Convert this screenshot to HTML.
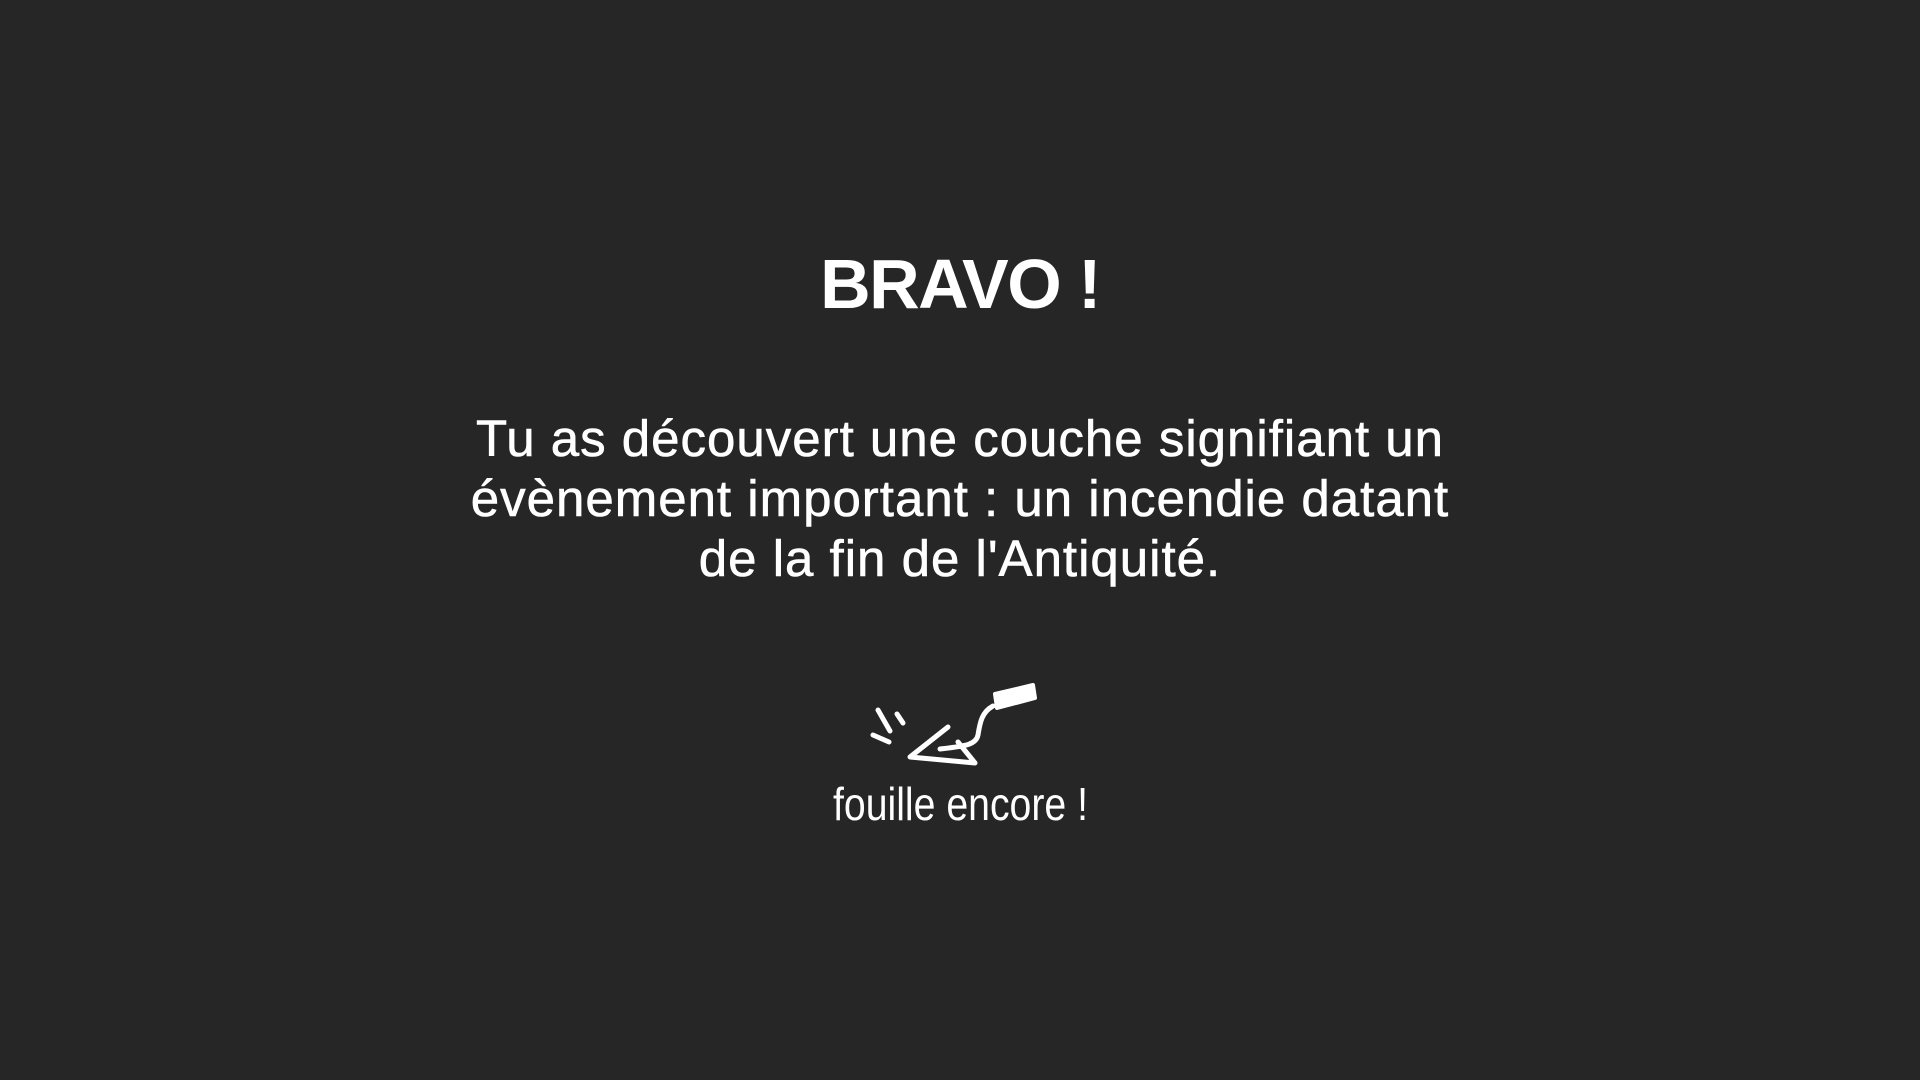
<!DOCTYPE html>
<html><head><meta charset="utf-8"><style>
html,body{margin:0;padding:0;width:1920px;height:1080px;background:#262626;overflow:hidden}
body{position:relative;font-family:"Liberation Sans",sans-serif;color:#fff}
h1{position:absolute;left:0;width:1920px;top:242px;margin:0;text-align:center;font-size:70px;font-weight:bold;letter-spacing:-1.5px;line-height:84px}
p{position:absolute;left:0;width:1920px;top:409px;margin:0;text-align:center;font-size:51px;letter-spacing:1px;line-height:60px;-webkit-text-stroke:0.6px #fff}
</style></head><body>
<h1>BRAVO !</h1>
<p>Tu as découvert une couche signifiant un<br>évènement important : un incendie datant<br>de la fin de l'Antiquité.</p>
<svg width="1920" height="1080" style="position:absolute;left:0;top:0" fill="none" stroke="#fff" stroke-linecap="round" stroke-linejoin="round">
<path d="M995 694 L1033 685 L1035 698 L997 708 Z" fill="#fff" stroke-width="4"/>
<path d="M993 706 C982 712 980 722 978 735 C976 745 965 746 940 749" stroke-width="5"/>
<path d="M948 727 L910 757 L975 763 L958 742" stroke-width="5"/>
<path d="M878 710 L890 731 M897 714 L903 723 M873 735 L889 742" stroke-width="5"/>
<text x="833" y="820" fill="#fff" stroke="none" font-family="Liberation Sans Narrow, Liberation Sans, sans-serif" font-size="46" textLength="255" lengthAdjust="spacingAndGlyphs">fouille encore !</text>
</svg>
</body></html>
